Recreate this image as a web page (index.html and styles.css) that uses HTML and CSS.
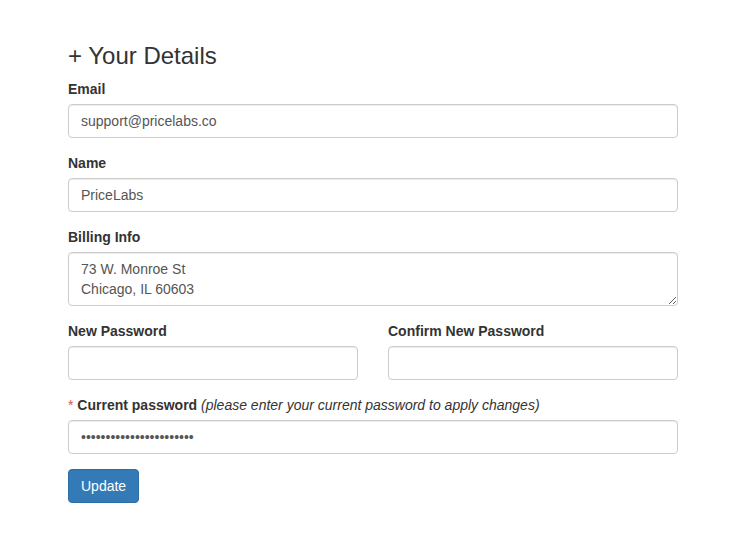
FILE: index.html
```html
<!DOCTYPE html>
<html>
<head>
<meta charset="utf-8">
<link rel="stylesheet" href="styles.css">
</head>
<body>
<div class="page">
  <h3 class="title">+ Your Details</h3>
  <form class="form">
    <div class="group">
      <label class="label">Email</label>
      <input class="control" type="text" value="support@pricelabs.co">
    </div>
    <div class="group">
      <label class="label">Name</label>
      <input class="control" type="text" value="PriceLabs">
    </div>
    <div class="group">
      <label class="label">Billing Info</label>
      <textarea class="control area" rows="2">73 W. Monroe St
Chicago, IL 60603</textarea>
    </div>
    <div class="row">
      <div class="group">
        <label class="label">New Password</label>
        <input class="control" type="password" value="">
      </div>
      <div class="group">
        <label class="label">Confirm New Password</label>
        <input class="control" type="password" value="">
      </div>
    </div>
    <div class="group">
      <label class="label"><span class="req">*</span> Current password <em class="hint">(please enter your current password to apply changes)</em></label>
      <input class="control" type="password" value="abcdefghijklmnopqrstuvw">
    </div>
    <button type="button" class="btn">Update</button>
  </form>
</div>
</body>
</html>
```
FILE: styles.css
```css
* { box-sizing: border-box; }
html, body { margin: 0; padding: 0; background: #fff; }
body {
  font-family: "Liberation Sans", Arial, sans-serif;
  font-size: 14px;
  line-height: 20px;
  color: #333;
}
.page {
  width: 610px;
  margin-left: 68px;
  padding-top: 43px;
}
.title {
  font-size: 24px;
  font-weight: 500;
  line-height: 26.4px;
  margin: 0 0 10px 0;
}
.form { margin: 0; }
.group { margin-bottom: 15px; }
.label {
  display: inline-block;
  font-weight: bold;
  margin-bottom: 5px;
}
.req { color: #d9534f; font-weight: normal; }
.hint { font-weight: normal; font-style: italic; }
.control {
  display: block;
  width: 100%;
  height: 34px;
  padding: 6px 12px;
  font-family: inherit;
  font-size: 14px;
  line-height: 20px;
  color: #555;
  background: #fff;
  border: 1px solid #ccc;
  border-radius: 4px;
  box-shadow: inset 0 1px 1px rgba(0,0,0,.075);
  margin: 0;
}
.area {
  height: 54px;
  resize: vertical;
}
.row {
  display: grid;
  grid-template-columns: 1fr 1fr;
  column-gap: 30px;
}
.btn {
  display: inline-block;
  height: 34px;
  padding: 6px 12px;
  font-family: inherit;
  font-size: 14px;
  line-height: 20px;
  color: #fff;
  background: #337ab7;
  border: 1px solid #2e6da4;
  border-radius: 4px;
  cursor: pointer;
}
```
